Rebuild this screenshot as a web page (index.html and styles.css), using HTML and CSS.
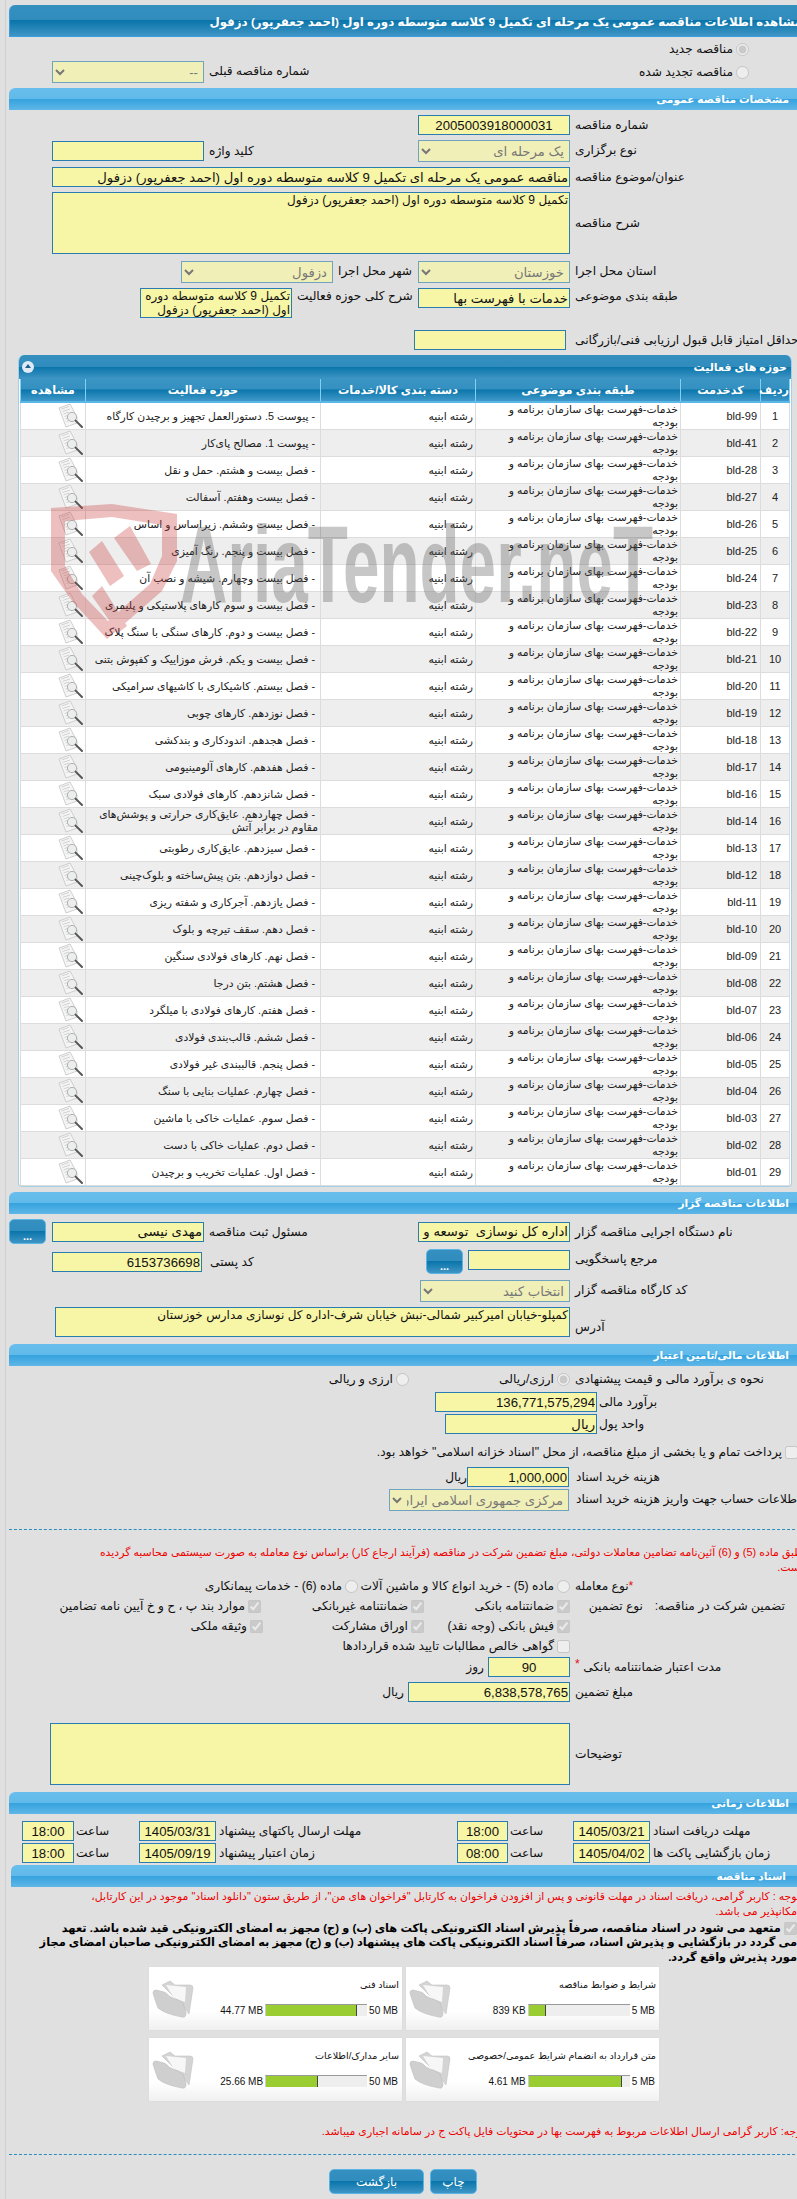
FILE: index.html
```html
<!DOCTYPE html>
<html lang="fa">
<head>
<meta charset="utf-8">
<title>مشاهده اطلاعات مناقصه</title>
<link rel="stylesheet" href="styles.css">
</head>
<body>
<svg class="defs" aria-hidden="true">
  <symbol id="doc" viewBox="0 0 26 26">
    <path d="M1 5 L12 1 L19 14 L19 20 L8 24 Z" fill="#f5f5f5" stroke="#c4c4c4" stroke-width=".8"/>
    <path d="M3.5 6 L11 3.4 M4.5 8.5 L12 6 M5.5 11 L11 9 M6.5 13.5 L10 12.3 M7.5 16 L10 15 M8.5 18.5 L11 17.6" stroke="#c8c8c8" stroke-width=".8" fill="none"/>
    <circle cx="14" cy="14" r="4.6" fill="#eceeee" stroke="#b0b0b0" stroke-width="1"/>
    <path d="M17.6 17.6 L24 24" stroke="#555" stroke-width="2" stroke-linecap="round"/>
  </symbol>
  <symbol id="folder" viewBox="0 0 42 38">
    <path d="M10 5 L18 1 L23 5 L38 5 Q41 5 41 8 L37 34 L30 25 Z" fill="#d4d4d4" stroke="#c2c2c2" stroke-width=".6"/>
    <path d="M14 5 L34 7 L33 22 L22 18 Z" fill="#f7f7f7"/>
    <path d="M1 13 Q1 10 4 10 L12 12 Q15 13 17 16 L21 18 Q27 20 31 23 L34 33 Q34 38 30 37 Q13 34 6 28 Q3 20 1 13 Z" fill="#cfcfcf" stroke="#bcbcbc" stroke-width=".6"/>
  </symbol>
</svg>
<div class="page">
  <svg class="watermark" viewBox="0 0 640 150" width="640" height="150" aria-hidden="true">
    <path fill-rule="evenodd" fill="#c83a3a" d="M9 12 L70 8 L135 18 L135 65 L120 95 L65 143 L30 105 L9 75 Z M23 25 L23 70 L40 98 L66 125 L108 88 L120 60 L120 29 L70 21 Z"/>
    <path fill="#c83a3a" d="M47 56 L60 45 L82 80 L68 90 Z M72 42 L88 30 L109 68 L95 75 Z M60 90 L85 130 L76 137 L50 100 Z"/>
    <text class="wm-text" x="138" y="106" textLength="473" lengthAdjust="spacingAndGlyphs">AriaTender.neT</text>
  </svg>

  <h1 class="title">مشاهده اطلاعات مناقصه عمومی یک مرحله ای تکمیل 9 کلاسه متوسطه دوره اول (احمد جعفرپور) دزفول</h1>

  <div class="row radio-row m5">
    <label class="opt-top"><input type="radio" disabled checked><span>مناقصه جدید</span></label>
  </div>
  <div class="row h22 m5">
    <label class="opt-top"><input type="radio" disabled><span>مناقصه تجدید شده</span></label>
    <div class="push-left">
      <span class="lbl-s w100 tl">شماره مناقصه قبلی</span>
      <select class="fld sel w152" disabled><option>--</option></select>
    </div>
  </div>

  <div class="bar m5">مشخصات مناقصه عمومی</div>

  <div class="row m5">
    <span class="lbl">شماره مناقصه</span>
    <input class="fld w152 center num" value="2005003918000031">
  </div>
  <div class="row m5">
    <span class="lbl">نوع برگزاری</span>
    <select class="fld sel w152" disabled><option>یک مرحله ای</option></select>
    <div class="push-left pt1">
      <span class="lbl-s w46 tl">کلید واژه</span>
      <input class="fld w152">
    </div>
  </div>
  <div class="row m5">
    <span class="lbl">عنوان/موضوع مناقصه</span>
    <input class="fld w518" value="مناقصه عمومی یک مرحله ای تکمیل 9 کلاسه متوسطه دوره اول (احمد جعفرپور) دزفول">
  </div>
  <div class="row m5 center-row">
    <span class="lbl">شرح مناقصه</span>
    <textarea class="fld ta w518 h62">تکمیل 9 کلاسه متوسطه دوره اول (احمد جعفرپور) دزفول</textarea>
  </div>
  <div class="row m7">
    <span class="lbl">استان محل اجرا</span>
    <select class="fld sel w152" disabled><option>خوزستان</option></select>
    <span class="lbl-s w80 tl">شهر محل اجرا</span>
    <select class="fld sel w152" disabled><option>دزفول</option></select>
  </div>
  <div class="row m5">
    <span class="lbl lbl-up">طبقه بندی موضوعی</span>
    <input class="fld w152" value="خدمات با فهرست بها">
    <span class="lbl-s lbl-up w121 tl">شرح کلی حوزه فعالیت</span>
    <textarea class="fld ta w152 h30 small">تکمیل 9 کلاسه متوسطه دوره اول (احمد جعفرپور) دزفول</textarea>
  </div>
  <div class="row m12">
    <span class="lbl gap9">حداقل امتیاز قابل قبول ارزیابی فنی/بازرگانی</span>
    <input class="fld w152">
  </div>

  <section class="panel">
    <div class="panel-head">
      <span>حوزه های فعالیت</span>
      <span class="collapse"></span>
    </div>
    <table class="grid">
      <colgroup><col class="c1"><col class="c2"><col class="c3"><col class="c4"><col class="c5"><col class="c6"></colgroup>
      <thead>
        <tr><th>ردیف</th><th>کدخدمت</th><th>طبقه بندی موضوعی</th><th>دسته بندی کالا/خدمات</th><th>حوزه فعالیت</th><th>مشاهده</th></tr>
      </thead>
      <tbody>
        <tr><td class="n">1</td><td class="code">bld-99</td><td class="cat">خدمات-فهرست بهای سازمان برنامه و بودجه</td><td>رشته ابنیه</td><td class="act">- پیوست 5. دستورالعمل تجهیز و برچیدن کارگاه</td><td class="view"><svg class="ico"><use href="#doc"/></svg></td></tr>
        <tr><td class="n">2</td><td class="code">bld-41</td><td class="cat">خدمات-فهرست بهای سازمان برنامه و بودجه</td><td>رشته ابنیه</td><td class="act">- پیوست 1. مصالح پای‌کار</td><td class="view"><svg class="ico"><use href="#doc"/></svg></td></tr>
        <tr><td class="n">3</td><td class="code">bld-28</td><td class="cat">خدمات-فهرست بهای سازمان برنامه و بودجه</td><td>رشته ابنیه</td><td class="act">- فصل بیست و هشتم. حمل و نقل</td><td class="view"><svg class="ico"><use href="#doc"/></svg></td></tr>
        <tr><td class="n">4</td><td class="code">bld-27</td><td class="cat">خدمات-فهرست بهای سازمان برنامه و بودجه</td><td>رشته ابنیه</td><td class="act">- فصل بیست وهفتم. آسفالت</td><td class="view"><svg class="ico"><use href="#doc"/></svg></td></tr>
        <tr><td class="n">5</td><td class="code">bld-26</td><td class="cat">خدمات-فهرست بهای سازمان برنامه و بودجه</td><td>رشته ابنیه</td><td class="act">- فصل بیست وششم. زیراساس و اساس</td><td class="view"><svg class="ico"><use href="#doc"/></svg></td></tr>
        <tr><td class="n">6</td><td class="code">bld-25</td><td class="cat">خدمات-فهرست بهای سازمان برنامه و بودجه</td><td>رشته ابنیه</td><td class="act">- فصل بیست و پنجم. رنگ آمیزی</td><td class="view"><svg class="ico"><use href="#doc"/></svg></td></tr>
        <tr><td class="n">7</td><td class="code">bld-24</td><td class="cat">خدمات-فهرست بهای سازمان برنامه و بودجه</td><td>رشته ابنیه</td><td class="act">- فصل بیست وچهارم. شیشه و نصب آن</td><td class="view"><svg class="ico"><use href="#doc"/></svg></td></tr>
        <tr><td class="n">8</td><td class="code">bld-23</td><td class="cat">خدمات-فهرست بهای سازمان برنامه و بودجه</td><td>رشته ابنیه</td><td class="act">- فصل بیست و سوم کارهای پلاستیکی و پلیمری</td><td class="view"><svg class="ico"><use href="#doc"/></svg></td></tr>
        <tr><td class="n">9</td><td class="code">bld-22</td><td class="cat">خدمات-فهرست بهای سازمان برنامه و بودجه</td><td>رشته ابنیه</td><td class="act">- فصل بیست و دوم. کارهای سنگی با سنگ پلاک</td><td class="view"><svg class="ico"><use href="#doc"/></svg></td></tr>
        <tr><td class="n">10</td><td class="code">bld-21</td><td class="cat">خدمات-فهرست بهای سازمان برنامه و بودجه</td><td>رشته ابنیه</td><td class="act">- فصل بیست و یکم. فرش موزاییک و کفپوش بتنی</td><td class="view"><svg class="ico"><use href="#doc"/></svg></td></tr>
        <tr><td class="n">11</td><td class="code">bld-20</td><td class="cat">خدمات-فهرست بهای سازمان برنامه و بودجه</td><td>رشته ابنیه</td><td class="act">- فصل بیستم. کاشیکاری با کاشیهای سرامیکی</td><td class="view"><svg class="ico"><use href="#doc"/></svg></td></tr>
        <tr><td class="n">12</td><td class="code">bld-19</td><td class="cat">خدمات-فهرست بهای سازمان برنامه و بودجه</td><td>رشته ابنیه</td><td class="act">- فصل نوزدهم. کارهای چوبی</td><td class="view"><svg class="ico"><use href="#doc"/></svg></td></tr>
        <tr><td class="n">13</td><td class="code">bld-18</td><td class="cat">خدمات-فهرست بهای سازمان برنامه و بودجه</td><td>رشته ابنیه</td><td class="act">- فصل هجدهم. اندودکاری و بندکشی</td><td class="view"><svg class="ico"><use href="#doc"/></svg></td></tr>
        <tr><td class="n">14</td><td class="code">bld-17</td><td class="cat">خدمات-فهرست بهای سازمان برنامه و بودجه</td><td>رشته ابنیه</td><td class="act">- فصل هفدهم. کارهای آلومینیومی</td><td class="view"><svg class="ico"><use href="#doc"/></svg></td></tr>
        <tr><td class="n">15</td><td class="code">bld-16</td><td class="cat">خدمات-فهرست بهای سازمان برنامه و بودجه</td><td>رشته ابنیه</td><td class="act">- فصل شانزدهم. کارهای فولادی سبک</td><td class="view"><svg class="ico"><use href="#doc"/></svg></td></tr>
        <tr><td class="n">16</td><td class="code">bld-14</td><td class="cat">خدمات-فهرست بهای سازمان برنامه و بودجه</td><td>رشته ابنیه</td><td class="act">- فصل چهاردهم. عایق‌کاری حرارتی و پوشش‌های مقاوم در برابر آتش</td><td class="view"><svg class="ico"><use href="#doc"/></svg></td></tr>
        <tr><td class="n">17</td><td class="code">bld-13</td><td class="cat">خدمات-فهرست بهای سازمان برنامه و بودجه</td><td>رشته ابنیه</td><td class="act">- فصل سیزدهم. عایق‌کاری رطوبتی</td><td class="view"><svg class="ico"><use href="#doc"/></svg></td></tr>
        <tr><td class="n">18</td><td class="code">bld-12</td><td class="cat">خدمات-فهرست بهای سازمان برنامه و بودجه</td><td>رشته ابنیه</td><td class="act">- فصل دوازدهم. بتن پیش‌ساخته و بلوک‌چینی</td><td class="view"><svg class="ico"><use href="#doc"/></svg></td></tr>
        <tr><td class="n">19</td><td class="code">bld-11</td><td class="cat">خدمات-فهرست بهای سازمان برنامه و بودجه</td><td>رشته ابنیه</td><td class="act">- فصل یازدهم. آجرکاری و شفته ریزی</td><td class="view"><svg class="ico"><use href="#doc"/></svg></td></tr>
        <tr><td class="n">20</td><td class="code">bld-10</td><td class="cat">خدمات-فهرست بهای سازمان برنامه و بودجه</td><td>رشته ابنیه</td><td class="act">- فصل دهم. سقف تیرچه و بلوک</td><td class="view"><svg class="ico"><use href="#doc"/></svg></td></tr>
        <tr><td class="n">21</td><td class="code">bld-09</td><td class="cat">خدمات-فهرست بهای سازمان برنامه و بودجه</td><td>رشته ابنیه</td><td class="act">- فصل نهم. کارهای فولادی سنگین</td><td class="view"><svg class="ico"><use href="#doc"/></svg></td></tr>
        <tr><td class="n">22</td><td class="code">bld-08</td><td class="cat">خدمات-فهرست بهای سازمان برنامه و بودجه</td><td>رشته ابنیه</td><td class="act">- فصل هشتم. بتن درجا</td><td class="view"><svg class="ico"><use href="#doc"/></svg></td></tr>
        <tr><td class="n">23</td><td class="code">bld-07</td><td class="cat">خدمات-فهرست بهای سازمان برنامه و بودجه</td><td>رشته ابنیه</td><td class="act">- فصل هفتم. کارهای فولادی با میلگرد</td><td class="view"><svg class="ico"><use href="#doc"/></svg></td></tr>
        <tr><td class="n">24</td><td class="code">bld-06</td><td class="cat">خدمات-فهرست بهای سازمان برنامه و بودجه</td><td>رشته ابنیه</td><td class="act">- فصل ششم. قالب‌بندی فولادی</td><td class="view"><svg class="ico"><use href="#doc"/></svg></td></tr>
        <tr><td class="n">25</td><td class="code">bld-05</td><td class="cat">خدمات-فهرست بهای سازمان برنامه و بودجه</td><td>رشته ابنیه</td><td class="act">- فصل پنجم. قالببندی غیر فولادی</td><td class="view"><svg class="ico"><use href="#doc"/></svg></td></tr>
        <tr><td class="n">26</td><td class="code">bld-04</td><td class="cat">خدمات-فهرست بهای سازمان برنامه و بودجه</td><td>رشته ابنیه</td><td class="act">- فصل چهارم. عملیات بنایی با سنگ</td><td class="view"><svg class="ico"><use href="#doc"/></svg></td></tr>
        <tr><td class="n">27</td><td class="code">bld-03</td><td class="cat">خدمات-فهرست بهای سازمان برنامه و بودجه</td><td>رشته ابنیه</td><td class="act">- فصل سوم. عملیات خاکی با ماشین</td><td class="view"><svg class="ico"><use href="#doc"/></svg></td></tr>
        <tr><td class="n">28</td><td class="code">bld-02</td><td class="cat">خدمات-فهرست بهای سازمان برنامه و بودجه</td><td>رشته ابنیه</td><td class="act">- فصل دوم. عملیات خاکی با دست</td><td class="view"><svg class="ico"><use href="#doc"/></svg></td></tr>
        <tr><td class="n">29</td><td class="code">bld-01</td><td class="cat">خدمات-فهرست بهای سازمان برنامه و بودجه</td><td>رشته ابنیه</td><td class="act">- فصل اول. عملیات تخریب و برچیدن</td><td class="view"><svg class="ico"><use href="#doc"/></svg></td></tr>
      </tbody>
    </table>
  </section>

  <div class="bar m5">اطلاعات مناقصه گزار</div>

  <div class="row m5 center-row">
    <span class="lbl">نام دستگاه اجرایی مناقصه گزار</span>
    <input class="fld w152" value="اداره کل نوسازی  توسعه و تجهیز مدارس">
    <span class="lbl-s w209 tl">مسئول ثبت مناقصه</span>
    <input class="fld w152" value="مهدی نیسی">
    <button class="btn dots" type="button">...</button>
  </div>
  <div class="row m5 r-ref">
    <span class="lbl">مرجع پاسخگویی</span>
    <input class="fld w102 pt-f1">
    <button class="btn dots m-5" type="button">...</button>
    <span class="lbl-s w216 tl pt-f3">کد پستی</span>
    <input class="fld w150 pt-f3" value="6153736698">
  </div>
  <div class="row m5">
    <span class="lbl">کد کارگاه مناقصه گزار</span>
    <select class="fld sel w150" disabled><option>انتخاب کنید</option></select>
  </div>
  <div class="row m5 end-row">
    <span class="lbl">آدرس</span>
    <textarea class="fld ta w515 h30">کمپلو-خیابان امیرکبیر شمالی-نبش خیابان شرف-اداره کل نوسازی مدارس خوزستان</textarea>
  </div>

  <div class="bar m7">اطلاعات مالی/تامین اعتبار</div>

  <div class="row m3 center-row">
    <span class="lbl">نحوه ی برآورد مالی و قیمت پیشنهادی</span>
    <label class="opt w161"><input type="radio" disabled checked><span>ارزی/ریالی</span></label>
    <label class="opt"><input type="radio" disabled><span>ارزی و ریالی</span></label>
  </div>
  <div class="row m3">
    <span class="lbl-n">برآورد مالی</span>
    <input class="fld w162" value="136,771,575,294">
  </div>
  <div class="row m2">
    <span class="lbl-n">واحد پول</span>
    <input class="fld w152" value="ریال">
  </div>
  <div class="row m11 check-row">
    <label class="full-check"><input type="checkbox" disabled><span>پرداخت تمام و یا بخشی از مبلغ مناقصه، از محل "اسناد خزانه اسلامی" خواهد بود.</span></label>
  </div>
  <div class="row m8 center-row">
    <span class="lbl-w">هزینه خرید اسناد</span>
    <input class="fld w102" value="1,000,000">
    <span class="unit0">ریال</span>
  </div>
  <div class="row m2">
    <span class="lbl-w">اطلاعات حساب جهت واریز هزینه خرید اسناد</span>
    <select class="fld sel w180" disabled><option>مرکزی جمهوری اسلامی ایران</option></select>
  </div>

  <hr class="dash m18">

  <p class="warn m15">طبق ماده (5) و (6) آئین‌نامه تضامین معاملات دولتی، مبلغ تضمین شرکت در مناقصه (فرآیند ارجاع کار) براساس نوع معامله به صورت سیستمی محاسبه گردیده<br>است.</p>

  <div class="row opt-row m1">
    <span class="lbl"><span class="star">*</span>نوع معامله</span>
    <label class="opt w212"><input type="radio" disabled><span>ماده (5) - خرید انواع کالا و ماشین آلات</span></label>
    <label class="opt"><input type="radio" disabled><span>ماده (6) - خدمات پیمانکاری</span></label>
  </div>
  <div class="row opt-row">
    <span class="lbl-pair"><span class="t-a">تضمین شرکت در مناقصه:</span><span class="t-b">نوع تضمین</span></span>
    <label class="opt w146"><input type="checkbox" disabled checked><span>ضمانتنامه بانکی</span></label>
    <label class="opt w163"><input type="checkbox" disabled checked><span>ضمانتنامه غیربانکی</span></label>
    <label class="opt"><input type="checkbox" disabled checked><span>موارد بند پ ، ح و خ آیین نامه تضامین</span></label>
  </div>
  <div class="row opt-row">
    <span class="lbl"></span>
    <label class="opt w146"><input type="checkbox" disabled checked><span>فیش بانکی (وجه نقد)</span></label>
    <label class="opt w161"><input type="checkbox" disabled checked><span>اوراق مشارکت</span></label>
    <label class="opt"><input type="checkbox" disabled checked><span>وثیقه ملکی</span></label>
  </div>
  <div class="row opt-row">
    <span class="lbl"></span>
    <label class="opt"><input type="checkbox" disabled><span>گواهی خالص مطالبات تایید شده قراردادها</span></label>
  </div>
  <div class="row m1 center-row">
    <span class="lbl">مدت اعتبار ضمانتنامه بانکی <span class="star up">*</span></span>
    <input class="fld w82 center" value="90">
    <span class="unit">روز</span>
  </div>
  <div class="row m5 center-row">
    <span class="lbl">مبلغ تضمین</span>
    <input class="fld w162" value="6,838,578,765">
    <span class="unit">ریال</span>
  </div>
  <div class="row m21 center-row">
    <span class="lbl">توضیحات</span>
    <textarea class="fld ta w520 h62"></textarea>
  </div>

  <div class="bar m7">اطلاعات زمانی</div>

  <div class="row m7 center-row">
    <span class="lbl-t1">مهلت دریافت اسناد</span>
    <input class="fld w77 center" value="1405/03/21">
    <span class="lbl-t2">ساعت</span>
    <input class="fld w51 center" value="18:00">
    <span class="lbl-t3">مهلت ارسال پاکتهای پیشنهاد</span>
    <input class="fld w77 center" value="1405/03/31">
    <span class="lbl-t2">ساعت</span>
    <input class="fld w52 center" value="18:00">
  </div>
  <div class="row m2 center-row">
    <span class="lbl-t1">زمان بازگشایی پاکت ها</span>
    <input class="fld w77 center" value="1405/04/02">
    <span class="lbl-t2">ساعت</span>
    <input class="fld w51 center" value="08:00">
    <span class="lbl-t3">زمان اعتبار پیشنهاد</span>
    <input class="fld w77 center" value="1405/09/19">
    <span class="lbl-t2">ساعت</span>
    <input class="fld w52 center" value="18:00">
  </div>

  <div class="bar bar-docs m2">اسناد مناقصه</div>

  <p class="warn docs-note">توجه : کاربر گرامی، دریافت اسناد در مهلت قانونی و پس از افزودن فراخوان به کارتابل "فراخوان های من"، از طریق ستون "دانلود اسناد" موجود در این کارتابل،<br>امکانپذیر می باشد.</p>

  <p class="pledge"><input type="checkbox" disabled checked> متعهد می شود در اسناد مناقصه، صرفاً پذیرش اسناد الکترونیکی پاکت های (ب) و (ج) مجهز به امضای الکترونیکی قید شده باشد. تعهد<br>می گردد در بازگشایی و پذیرش اسناد، صرفاً اسناد الکترونیکی پاکت های پیشنهاد (ب) و (ج) مجهز به امضای الکترونیکی صاحبان امضای مجاز<br>مورد پذیرش واقع گردد.</p>

  <div class="cards">
    <article class="card">
      <div class="card-title">شرایط و ضوابط مناقصه</div>
      <div class="meter-row"><span class="size">5 MB</span><span class="track"><span class="fill" style="width:17%"></span></span><span class="size">839 KB</span></div>
      <svg class="folder"><use href="#folder"/></svg>
    </article>
    <article class="card">
      <div class="card-title">اسناد فنی</div>
      <div class="meter-row"><span class="size">50 MB</span><span class="track"><span class="fill" style="width:90%"></span></span><span class="size">44.77 MB</span></div>
      <svg class="folder"><use href="#folder"/></svg>
    </article>
    <article class="card">
      <div class="card-title">متن قرارداد به انضمام شرایط عمومی/خصوصی</div>
      <div class="meter-row"><span class="size">5 MB</span><span class="track"><span class="fill" style="width:92%"></span></span><span class="size">4.61 MB</span></div>
      <svg class="folder"><use href="#folder"/></svg>
    </article>
    <article class="card">
      <div class="card-title">سایر مدارک/اطلاعات</div>
      <div class="meter-row"><span class="size">50 MB</span><span class="track"><span class="fill" style="width:51%"></span></span><span class="size">25.66 MB</span></div>
      <svg class="folder"><use href="#folder"/></svg>
    </article>
  </div>

  <p class="warn final-note">توجه: کاربر گرامی ارسال اطلاعات مربوط به فهرست بها در محتویات فایل پاکت ج در سامانه اجباری میباشد.</p>

  <hr class="dash m15">

  <div class="actions">
    <button class="btn print" type="button">چاپ</button>
    <button class="btn back" type="button">بازگشت</button>
  </div>
</div>
</body>
</html>
```
FILE: styles.css
```css
html, body {
  margin: 0;
  padding: 0;
  background: #e0e0e0;
  overflow: hidden;
  height: 2199px;
}
.defs { position: absolute; width: 0; height: 0; }
.page {
  position: relative;
  width: 810px;
  height: 2199px;
  direction: rtl;
  font-family: "Liberation Sans", "DejaVu Sans", sans-serif;
  font-size: 12.2px;
  color: #111;
  padding-top: 5px;
  box-sizing: border-box;
  background: linear-gradient(to right, #e0e0e0 5px, #cfcfcf 5px, #cfcfcf 6px, #e0e0e0 6px);
}
.watermark {
  position: absolute;
  left: 42px;
  top: 496px;
  opacity: .32;
  pointer-events: none;
  z-index: 5;
  direction: ltr;
}
.wm-text {
  font-family: "Liberation Sans", sans-serif;
  font-weight: bold;
  font-size: 109px;
  fill: #555;
  direction: ltr;
}
.title {
  margin: 0 0 0 9px;
  height: 32px;
  line-height: 34px;
  padding-right: 8px;
  box-sizing: border-box;
  font-size: 11.8px;
  font-weight: bold;
  color: #fff;
  white-space: nowrap;
  border-top-left-radius: 6px;
  border-bottom: 1px solid #3a9fe0;
  border-left: 1px solid #3a9fe0;
  background: linear-gradient(#3590c0 0, #2f8cbc 50%, #0a75aa 50%, #4095c5 100%);
}
.bar {
  margin-left: 9px;
  height: 22px;
  line-height: 22px;
  padding-right: 21px;
  box-sizing: border-box;
  font-size: 10.6px;
  font-weight: bold;
  color: #fff;
  border-top-left-radius: 6px;
  border-top-right-radius: 6px;
  background: linear-gradient(#68bfed 0, #60b9e9 50%, #35a2de 50%, #5fb7e7 100%);
}
.bar-docs { margin-left: 11px; padding-right: 24px; }

.m1 { margin-top: 1px; }
.m2 { margin-top: 2px; }
.m3 { margin-top: 3px; }
.m5 { margin-top: 5px; }
.m7 { margin-top: 7px; }
.m8 { margin-top: 8px; }
.m11 { margin-top: 11px; }
.m12 { margin-top: 12px; }
.m15 { margin-top: 15px; }
.m18 { margin-top: 18px; }
.m21 { margin-top: 21px; }

.row { display: flex; align-items: flex-start; }
.center-row { align-items: center; }
.end-row { align-items: flex-end; }
.radio-row { height: 14px; }
.h22 { height: 22px; }
.opt-row { height: 20px; align-items: center; }
.check-row { height: 14px; }
.r-ref { height: 26px; }

.lbl, .lbl-s, .lbl-n, .lbl-w, .lbl-t1, .lbl-t2, .lbl-t3 {
  line-height: 20px;
  white-space: nowrap;
  text-align: left;
  flex: none;
}
.lbl { width: 235px; margin-left: 5px; }
.gap9 { margin-left: 9px; }
.lbl-up { line-height: 16px; }
.lbl-s { margin-left: 5px; }
.lbl-n { width: 211px; margin-left: 2px; }
.lbl-w { width: 234px; margin-left: 7px; }
.lbl-t1 { width: 157px; margin-left: 3px; }
.lbl-t2 { width: 63px; margin-left: 2px; }
.lbl-t3 { width: 238px; margin-left: 3px; }
.lbl-pair { width: 240px; display: flex; line-height: 20px; white-space: nowrap; }
.t-a { width: 150px; padding-right: 25px; box-sizing: border-box; }
.t-b { width: 90px; padding-right: 17px; box-sizing: border-box; }
.tl { text-align: left; }
.star { color: #e01010; }
.up { position: relative; top: -3px; }

.fld {
  box-sizing: border-box;
  height: 20px;
  padding: 0 1px;
  border: 1px solid #2a7db0;
  border-radius: 0;
  background: #f7f5a6;
  color: #111;
  font-family: inherit;
  font-size: 13.2px;
  direction: rtl;
  flex: none;
  outline: none;
  margin: 0;
}
.sel { height: 22px; background: #f1efb8; color: #777; border-color: #6fa3be; opacity: 1; }
.ta { resize: none; overflow: hidden; line-height: 15px; font-size: 12px; }
.small { line-height: 14px; }
.center { text-align: center; }
.h30 { height: 30px; }
.h62 { height: 62px; }
.w51 { width: 51px; }
.w52 { width: 52px; }
.w77 { width: 77px; }
.w82 { width: 82px; }
.w102 { width: 102px; }
.w150 { width: 150px; }
.w152 { width: 152px; }
.w162 { width: 162px; }
.w180 { width: 180px; }
.w515 { width: 515px; }
.w518 { width: 518px; }
.w520 { width: 520px; }
.w46 { width: 46px; }
.w80 { width: 80px; }
.w100 { width: 105px; }
.w121 { width: 121px; }
.w209 { width: 209px; }
.w216 { width: 216px; margin-left: 8px; }
.pt1 { margin-top: 1px; }
.pt-f1 { margin-top: 1px; }
.pt-f3 { margin-top: 3px; }
.m-5 { margin-right: 5px; }

.push-left {
  display: flex;
  align-items: flex-start;
  margin-right: auto;
  margin-left: 52px;
}
.opt-top {
  display: flex;
  align-items: center;
  margin-right: 61px;
  height: 14px;
  white-space: nowrap;
}
.opt-top input, .opt input, .full-check input { margin: 0 0 0 3px; flex: none; }
.h22 .opt-top { margin-top: 4px; }
.opt { display: flex; align-items: center; white-space: nowrap; flex: none; }
.w146 { width: 146px; }
.w161 { width: 161px; }
.w163 { width: 163px; }
.w212 { width: 212px; }
.full-check {
  display: flex;
  align-items: center;
  white-space: nowrap;
  margin-right: 12px;
}
.unit { margin-right: 4px; white-space: nowrap; }
.unit0 { margin-right: 0; white-space: nowrap; }

.panel {
  margin: 5px 18px 0 18px;
  border: 1px solid #a5cfe6;
  border-top: 0;
  border-radius: 6px 6px 4px 4px;
  overflow: hidden;
  background: #fff;
  padding: 0;
}
.panel-head {
  height: 24px;
  line-height: 24px;
  display: flex;
  justify-content: space-between;
  align-items: center;
  padding: 0 4px 0 3px;
  color: #fff;
  font-weight: bold;
  font-size: 11px;
  background: linear-gradient(#3590c0 0, #2f8cbc 50%, #0a75aa 50%, #4095c5 100%);
}
.collapse {
  width: 12px;
  height: 12px;
  border-radius: 50%;
  background: #dfeaf6;
  position: relative;
}
.collapse::after {
  content: "";
  position: absolute;
  left: 3px;
  top: 3px;
  border-left: 3px solid transparent;
  border-right: 3px solid transparent;
  border-bottom: 4px solid #1b5f8c;
}
.grid {
  table-layout: fixed;
  border-collapse: collapse;
  width: 769px;
  margin-right: 1px;
}
.c1 { width: 29px; }
.c2 { width: 80px; }
.c3 { width: 205px; }
.c4 { width: 155px; }
.c5 { width: 235px; }
.c6 { width: 65px; }
.grid th {
  height: 22px;
  padding: 0;
  color: #fff;
  font-size: 11.3px;
  font-weight: bold;
  border-right: 1px solid #7fd0f5;
  border-left: 1px solid #7fd0f5;
  border-bottom: 2px solid #5ab8e8;
  background: linear-gradient(#3a94c4 0, #3490c0 45%, #0c76ab 50%, #3f98c8 100%);
}
.grid td {
  height: 27px;
  box-sizing: border-box;
  padding: 0 2px;
  font-size: 10.8px;
  line-height: 13px;
  text-align: right;
  color: #222;
  border: 1px solid #dcdcdc;
}
.grid tbody tr:nth-child(even) td { background: #eee; }
.grid td.n { text-align: center; padding: 0; font-size: 11px; }
.grid td.code { text-align: right; padding-right: 3px; font-size: 11px; }
.grid td.cat { padding-left: 22px; }
.grid td.act { text-indent: 3px; }
.grid td.view { padding: 0 1px 0 0; }
.ico { width: 26px; height: 26px; display: block; }

.dash {
  height: 0;
  margin-bottom: 0;
  margin-left: 9px;
  margin-right: 0;
  border: 0;
  border-top: 1px dashed #2a8fbf;
}
.warn {
  margin-bottom: 0;
  margin-right: 0;
  padding: 0 7px 0 0;
  color: #ee0000;
  font-size: 10.9px;
  line-height: 15px;
  white-space: nowrap;
}
.docs-note { margin-top: 2px; padding-right: 10px; }
.pledge {
  margin: 2px 0 0;
  padding-right: 13px;
  font-weight: bold;
  font-size: 11.4px;
  line-height: 14.3px;
  white-space: nowrap;
  color: #000;
}
.pledge input { margin: 0; vertical-align: middle; }

.cards {
  display: grid;
  grid-template-columns: 253px 253px;
  grid-auto-rows: 63px;
  column-gap: 4px;
  row-gap: 8px;
  margin: 3px 151px 0 0;
  width: 510px;
}
.card {
  position: relative;
  box-sizing: border-box;
  padding: 10px 3px 0;
  background: linear-gradient(#fff 0, #fff 70%, #f0f0f0 100%);
  box-shadow: 0 0 1px #ccc;
}
.card-title { font-size: 9.6px; line-height: 16px; white-space: nowrap; color: #111; }
.meter-row {
  display: flex;
  align-items: center;
  margin-top: 11px;
  padding-right: 1px;
  height: 12px;
  gap: 2px;
  font-size: 10px;
  white-space: nowrap;
}
.size { direction: ltr; unicode-bidi: isolate; }
.track {
  display: block;
  width: 102px;
  height: 12px;
  background: #eee;
  border-top: 1px solid #999;
  border-left: 1px solid #ccc;
  box-sizing: border-box;
  direction: ltr;
  flex: none;
}
.fill {
  display: block;
  height: 11px;
  box-sizing: border-box;
  background: #9acd32;
  border-right: 1px solid #444;
}
.folder { position: absolute; left: 3px; top: 13px; width: 42px; height: 38px; }

.final-note { margin-top: 23px; padding-right: 5px; }
.actions { display: flex; gap: 6px; margin: 14px 333px 0 0; }
.btn {
  box-sizing: border-box;
  border: 1px solid #5ab4e4;
  border-radius: 5px;
  padding: 0;
  color: #fff;
  font-family: inherit;
  font-size: 12px;
  background: linear-gradient(#3590c0 0, #2f8cbc 50%, #0a75aa 50%, #4095c5 100%);
  flex: none;
}
.dots { width: 37px; height: 25px; margin-right: 6px; font-size: 11px; font-weight: bold; padding-top: 8px; }
.m-5.dots { margin-right: 5px; }
.print { width: 47px; height: 25px; }
.back { width: 95px; height: 25px; }
```
